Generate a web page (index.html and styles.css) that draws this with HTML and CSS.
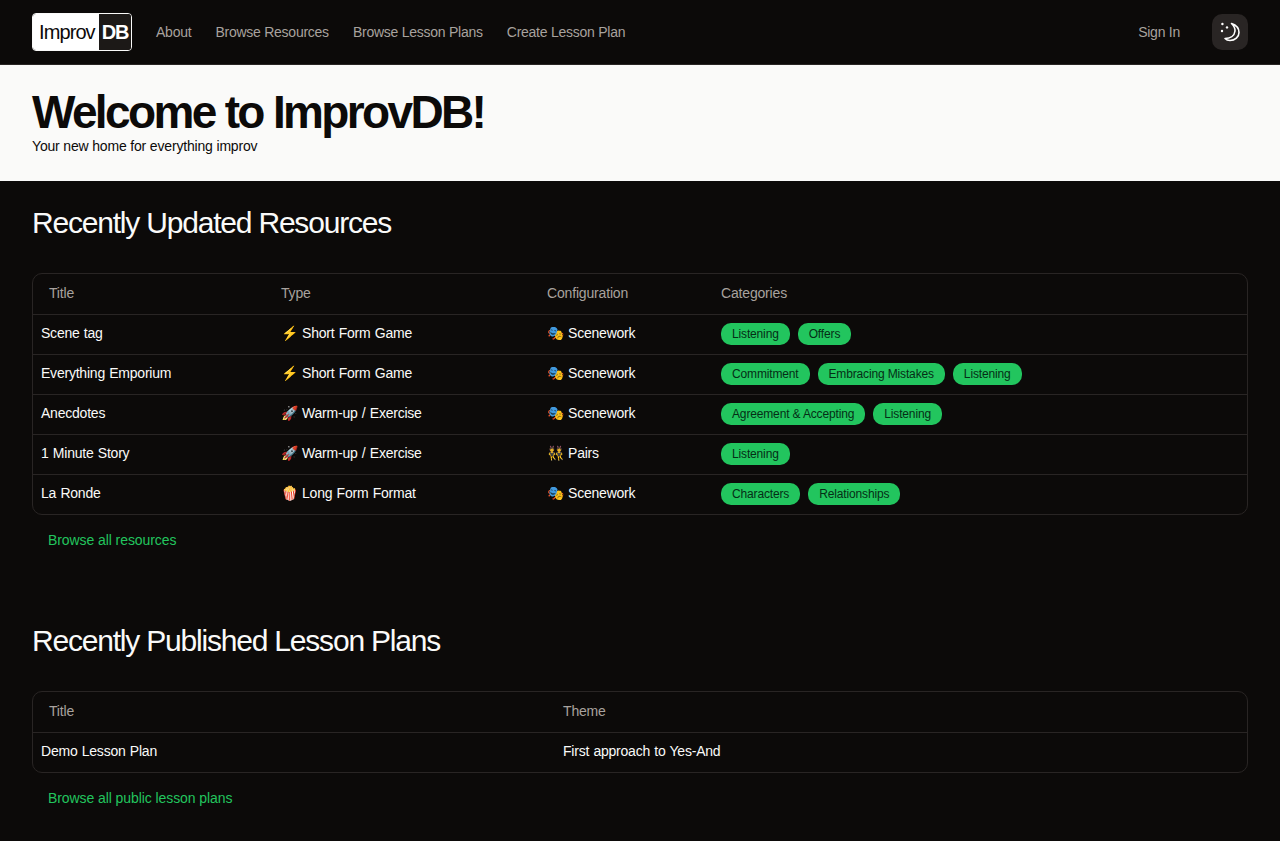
FILE: index.html
```html
<!DOCTYPE html>
<html lang="en">
<head>
    <meta charset="UTF-8">
    <meta name="viewport" content="width=device-width, initial-scale=1.0">
    <title>ImprovDB</title>
    <link rel="stylesheet" href="styles.css">
</head>
<body>

    <nav class="navbar">
        <a class="logo" href="#"><span class="logo-left">Improv</span><span class="logo-right">DB</span></a>
        <a class="nav-link" href="#">About</a>
        <a class="nav-link" href="#">Browse Resources</a>
        <a class="nav-link" href="#">Browse Lesson Plans</a>
        <a class="nav-link" href="#">Create Lesson Plan</a>
        <a class="nav-link sign-in" href="#">Sign In</a>
        <button class="theme-btn" aria-label="Toggle theme">
            <svg width="20" height="20" viewBox="0 0 20 20" fill="none">
                <path d="M11.5 1.5 C16 3 19 6.5 19 10.5 C19 15 15 18.5 10 18.5 C8 18.5 6 17.6 5 16.5 C10 16.5 14.5 14 15 9 C15.3 6 13.5 3.5 11.5 1.5 Z" stroke="#fff" stroke-width="1.6" stroke-linejoin="round"/>
                <circle cx="2.4" cy="2" r="1.2" fill="#fff"/>
                <circle cx="2" cy="9" r="1.2" fill="#fff"/>
                <circle cx="7" cy="5.4" r="1.2" fill="#fff"/>
            </svg>
        </button>
    </nav>

    <header class="hero">
        <h1>Welcome to ImprovDB!</h1>
        <p>Your new home for everything improv</p>
    </header>

    <section class="block">
        <h2>Recently Updated Resources</h2>
        <div class="table-wrap">
            <table class="resources">
                <thead>
                    <tr><th>Title</th><th>Type</th><th>Configuration</th><th>Categories</th></tr>
                </thead>
                <tbody>
                    <tr>
                        <td>Scene tag</td>
                        <td>⚡ Short Form Game</td>
                        <td>🎭 Scenework</td>
                        <td class="tags"><span class="badge">Listening</span><span class="badge">Offers</span></td>
                    </tr>
                    <tr>
                        <td>Everything Emporium</td>
                        <td>⚡ Short Form Game</td>
                        <td>🎭 Scenework</td>
                        <td class="tags"><span class="badge">Commitment</span><span class="badge">Embracing Mistakes</span><span class="badge">Listening</span></td>
                    </tr>
                    <tr>
                        <td>Anecdotes</td>
                        <td>🚀 Warm-up / Exercise</td>
                        <td>🎭 Scenework</td>
                        <td class="tags"><span class="badge">Agreement &amp; Accepting</span><span class="badge">Listening</span></td>
                    </tr>
                    <tr>
                        <td>1 Minute Story</td>
                        <td>🚀 Warm-up / Exercise</td>
                        <td>👯 Pairs</td>
                        <td class="tags"><span class="badge">Listening</span></td>
                    </tr>
                    <tr>
                        <td>La Ronde</td>
                        <td>🍿 Long Form Format</td>
                        <td>🎭 Scenework</td>
                        <td class="tags"><span class="badge">Characters</span><span class="badge">Relationships</span></td>
                    </tr>
                </tbody>
            </table>
        </div>
        <a class="browse-link" href="#">Browse all resources</a>
    </section>

    <section class="block">
        <h2>Recently Published Lesson Plans</h2>
        <div class="table-wrap">
            <table class="plans">
                <thead>
                    <tr><th>Title</th><th>Theme</th></tr>
                </thead>
                <tbody>
                    <tr><td>Demo Lesson Plan</td><td>First approach to Yes-And</td></tr>
                </tbody>
            </table>
        </div>
        <a class="browse-link" href="#">Browse all public lesson plans</a>
    </section>

</body>
</html>
```

FILE: styles.css
```css
* {
    box-sizing: border-box;
}
body {
    margin: 0;
    font-family: "Liberation Sans", Arial, sans-serif;
    font-size: 14px;
    letter-spacing: -0.17px;
    background-color: #0c0a09;
    color: #fafaf9;
}
a {
    text-decoration: none;
}

.navbar {
    display: flex;
    align-items: center;
    gap: 24px;
    height: 65px;
    padding: 0 32px;
    border-bottom: 1px solid #292524;
}
.logo {
    display: flex;
    height: 38px;
    border: 1px solid #fafaf9;
    border-radius: 4px;
    overflow: hidden;
    font-size: 20px;
    line-height: 36px;
}
.logo-left {
    background-color: #fff;
    color: #0c0a09;
    padding: 0 4px 0 6px;
    letter-spacing: -0.9px;
}
.logo-right {
    background-color: #1c1917;
    color: #fff;
    font-weight: bold;
    padding: 0 3px;
    letter-spacing: -1.3px;
}
.nav-link {
    margin-top: -1px;
    color: #a8a29e;
    letter-spacing: -0.25px;
}
.sign-in {
    margin-left: auto;
}
.theme-btn {
    display: flex;
    align-items: center;
    justify-content: center;
    width: 36px;
    height: 36px;
    margin-left: 8px;
    padding: 0;
    border: 0;
    border-radius: 10px;
    background-color: #292524;
}

.hero {
    height: 116px;
    padding: 23px 32px 0;
    background-color: #fafaf9;
    color: #0c0a09;
}
.hero h1 {
    margin: 0;
    font-size: 46px;
    line-height: 48px;
    letter-spacing: -2.65px;
}
.hero p {
    margin: 0;
    line-height: 20px;
}

.block {
    padding: 24px 32px 48px;
}
.block:last-child {
    padding-bottom: 32px;
}
.block h2 {
    margin: 0 0 32px;
    font-size: 30px;
    font-weight: normal;
    line-height: 36px;
    letter-spacing: -1.2px;
}
.table-wrap {
    border: 1px solid #292524;
    border-radius: 10px;
    overflow: hidden;
}
table {
    width: 100%;
    border-collapse: collapse;
    table-layout: fixed;
}
th {
    height: 40px;
    padding: 0 16px 2px;
    text-align: left;
    font-weight: normal;
    color: #a8a29e;
}
td {
    height: 40px;
    padding: 0 8px 2px;
    border-top: 1px solid #292524;
    white-space: nowrap;
    letter-spacing: -0.22px;
    word-spacing: 0.6px;
}
td.tags {
    padding-bottom: 0;
}
.resources th:nth-child(1),
.resources td:nth-child(1) {
    width: 232px;
}
.resources th:nth-child(2),
.resources td:nth-child(2) {
    width: 266px;
}
.resources th:nth-child(3),
.resources td:nth-child(3) {
    width: 174px;
}
.resources td:nth-child(n+2) {
    padding-left: 16px;
}
.plans th:nth-child(1),
.plans td:nth-child(1) {
    width: 514px;
}
.plans td:nth-child(2) {
    padding-left: 16px;
}

.badge {
    display: inline-block;
    height: 22px;
    margin-right: 8px;
    padding: 0 11px;
    border-radius: 10px;
    background-color: #22c55e;
    color: #052e16;
    font-size: 12px;
    line-height: 22px;
    letter-spacing: -0.15px;
    word-spacing: 0;
    vertical-align: middle;
}

.browse-link {
    display: inline-block;
    margin: 15px 0 1px 16px;
    line-height: 20px;
    color: #22c55e;
    letter-spacing: -0.08px;
}
```
